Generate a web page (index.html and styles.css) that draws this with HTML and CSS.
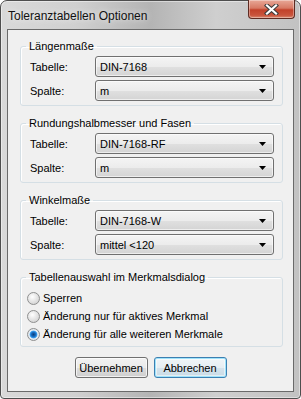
FILE: index.html
```html
<!DOCTYPE html>
<html lang="de">
<head>
    <meta charset="UTF-8">
    <title>Toleranztabellen Optionen</title>
    <link rel="stylesheet" href="styles.css">
</head>
<body>
    <div class="window">
        <div class="titlebar">
            <span class="title">Toleranztabellen Optionen</span>
            <div class="close-btn">
                <svg width="15" height="11" viewBox="0 0 15 11">
                    <path d="M3 1.5 L12 9.5 M12 1.5 L3 9.5" stroke="#3b3b3b" stroke-width="4.2" stroke-linecap="square"/>
                    <path d="M3 1.5 L12 9.5 M12 1.5 L3 9.5" stroke="#ffffff" stroke-width="2.2" stroke-linecap="square"/>
                </svg>
            </div>
        </div>

        <div class="client">
            <fieldset class="group">
                <legend>Längenmaße</legend>
                <div class="row">
                    <span class="label">Tabelle:</span>
                    <div class="combo"><span>DIN-7168</span><svg class="arrow" width="7" height="4"><path d="M0 0 H7 L3.5 4 Z"/></svg></div>
                </div>
                <div class="row">
                    <span class="label">Spalte:</span>
                    <div class="combo"><span>m</span><svg class="arrow" width="7" height="4"><path d="M0 0 H7 L3.5 4 Z"/></svg></div>
                </div>
            </fieldset>

            <fieldset class="group">
                <legend>Rundungshalbmesser und Fasen</legend>
                <div class="row">
                    <span class="label">Tabelle:</span>
                    <div class="combo"><span>DIN-7168-RF</span><svg class="arrow" width="7" height="4"><path d="M0 0 H7 L3.5 4 Z"/></svg></div>
                </div>
                <div class="row">
                    <span class="label">Spalte:</span>
                    <div class="combo"><span>m</span><svg class="arrow" width="7" height="4"><path d="M0 0 H7 L3.5 4 Z"/></svg></div>
                </div>
            </fieldset>

            <fieldset class="group">
                <legend>Winkelmaße</legend>
                <div class="row">
                    <span class="label">Tabelle:</span>
                    <div class="combo"><span>DIN-7168-W</span><svg class="arrow" width="7" height="4"><path d="M0 0 H7 L3.5 4 Z"/></svg></div>
                </div>
                <div class="row">
                    <span class="label">Spalte:</span>
                    <div class="combo"><span>mittel &lt;120</span><svg class="arrow" width="7" height="4"><path d="M0 0 H7 L3.5 4 Z"/></svg></div>
                </div>
            </fieldset>

            <fieldset class="group radios">
                <legend>Tabellenauswahl im Merkmalsdialog</legend>
                <div class="radio"><span class="radio-dot"></span>Sperren</div>
                <div class="radio"><span class="radio-dot"></span>Änderung nur für aktives Merkmal</div>
                <div class="radio"><span class="radio-dot checked"></span>Änderung für alle weiteren Merkmale</div>
            </fieldset>

            <div class="buttons">
                <div class="btn">Übernehmen</div>
                <div class="btn default">Abbrechen</div>
            </div>
        </div>
    </div>
</body>
</html>
```

FILE: styles.css
```css
html, body {
    margin: 0;
    padding: 0;
}

body {
    width: 301px;
    height: 399px;
    overflow: hidden;
    background: #ffffff;
    font-family: "Liberation Sans", Arial, sans-serif;
    font-size: 11px;
    color: #000;
}

/* 창 프레임 */
.window {
    width: 301px;
    height: 399px;
    box-sizing: border-box;
    border: 1px solid #4e4e4e;
    border-radius: 7px 7px 4px 4px;
    padding: 0 6px 6px 6px;
    display: flex;
    flex-direction: column;
    background: linear-gradient(to right, #d9d9d9 0%, #d0d0d0 25%, #b4b4b4 50%, #cfcfcf 72%, #c2c2c2 100%);
    box-shadow: inset 0 0 0 1px rgba(255, 255, 255, 0.45);
}

.titlebar {
    height: 28px;
    display: flex;
    justify-content: space-between;
    align-items: flex-start;
    flex-shrink: 0;
}

.title {
    font-size: 12px;
    color: #111;
    margin-top: 8px;
    margin-left: 1px;
    text-shadow: 0 0 6px rgba(255, 255, 255, 0.9);
}

.close-btn {
    width: 47px;
    height: 19px;
    margin-top: -1px;
    margin-right: -1px;
    box-sizing: border-box;
    border: 1px solid #5e2b22;
    border-top: none;
    border-radius: 0 0 4px 4px;
    background: linear-gradient(to bottom, #e8a898 0%, #d77964 45%, #c2412a 55%, #c9543c 85%, #d98a70 100%);
    box-shadow: inset 0 0 0 1px rgba(255, 255, 255, 0.35);
    display: flex;
    align-items: center;
    justify-content: center;
}

.client {
    flex: 1;
    border: 1px solid #6a6a6a;
    background: #f0f0f0;
    padding-top: 9px;
}

/* 그룹 상자 */
.group {
    width: 263px;
    box-sizing: border-box;
    margin: 0 0 10px 12px;
    padding: 3px 8px 4px 9px;
    border: 1px solid #d5dfe5;
    border-radius: 3px;
    box-shadow: inset 1px 1px 0 #ffffff;
}

.group legend {
    margin-left: -4px;
    padding: 0 3px;
    line-height: 14px;
}

.row {
    display: flex;
    align-items: center;
    height: 21px;
}

.row + .row {
    margin-top: 3px;
}

.label {
    width: 65px;
    flex-shrink: 0;
}

.combo {
    flex: 1;
    height: 21px;
    box-sizing: border-box;
    border: 1px solid #707070;
    border-radius: 3px;
    padding: 0 7px 0 4px;
    display: flex;
    align-items: center;
    justify-content: space-between;
    background: linear-gradient(to bottom, #f4f4f4 0%, #ececec 50%, #e0e0e0 51%, #d4d4d4 100%);
    box-shadow: inset 0 0 0 1px rgba(255, 255, 255, 0.6);
}

.arrow path {
    fill: #000;
}

/* 라디오 버튼 */
.radios {
    margin-bottom: 10px;
    padding-top: 5px;
    padding-bottom: 3px;
}

.radio {
    display: flex;
    align-items: center;
    height: 18px;
    margin-left: -3px;
}

.radio-dot {
    width: 13px;
    height: 13px;
    box-sizing: border-box;
    border-radius: 50%;
    border: 1px solid #8e8f8f;
    background: radial-gradient(circle at 40% 35%, #ffffff 0%, #e6e6e6 45%, #c9c9c9 100%);
    margin-right: 3px;
    flex-shrink: 0;
}

.radio-dot.checked {
    background: radial-gradient(circle at 50% 50%, #0a3f7a 0%, #1a6fc4 30%, #3ba2f0 45%, #e8eef4 55%, #d6d6d6 100%);
}

/* 하단 버튼 */
.buttons {
    display: flex;
    justify-content: center;
    gap: 6px;
}

.btn {
    width: 73px;
    height: 21px;
    box-sizing: border-box;
    border: 1px solid #707070;
    border-radius: 3px;
    display: flex;
    align-items: center;
    justify-content: center;
    background: linear-gradient(to bottom, #f2f2f2 0%, #ebebeb 50%, #dddddd 51%, #cfcfcf 100%);
    box-shadow: inset 0 0 0 1px rgba(255, 255, 255, 0.7);
}

.btn.default {
    border-color: #3c7fb1;
    box-shadow: inset 0 0 0 1px #9fe3fb, inset 0 0 0 2px rgba(255, 255, 255, 0.5);
    background: linear-gradient(to bottom, #f0f5f8 0%, #e6eef3 50%, #d5e3ec 51%, #c8dbe6 100%);
}
```
